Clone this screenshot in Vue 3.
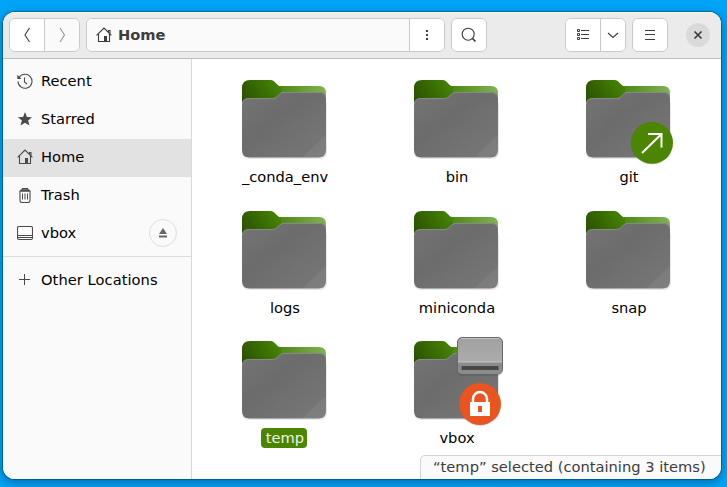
<script setup>
const places = [
  { name: 'Recent', icon: 'recent' },
  { name: 'Starred', icon: 'star' },
  { name: 'Home', icon: 'home', active: true },
  { name: 'Trash', icon: 'trash' },
  { name: 'vbox', icon: 'drive', eject: true },
]

const folders = [
  { name: '_conda_env' },
  { name: 'bin' },
  { name: 'git', link: true },
  { name: 'logs' },
  { name: 'miniconda' },
  { name: 'snap' },
  { name: 'temp', selected: true },
  { name: 'vbox', mount: true },
]
</script>

<template>
  <div class="desktop">
    <svg class="defs" width="0" height="0">
      <defs>
        <linearGradient id="tab" gradientUnits="userSpaceOnUse" x1="8" y1="30" x2="42" y2="10">
          <stop offset="0" stop-color="#2b5200" />
          <stop offset="1" stop-color="#468405" />
        </linearGradient>
        <linearGradient id="strip" gradientUnits="userSpaceOnUse" x1="38" y1="0" x2="90" y2="0">
          <stop offset="0" stop-color="#468405" />
          <stop offset="0.2" stop-color="#528d1c" />
          <stop offset="1" stop-color="#82b154" />
        </linearGradient>
        <linearGradient id="front" x1="0" y1="0" x2="1" y2="1">
          <stop offset="0" stop-color="#747474" />
          <stop offset="0.4" stop-color="#6c6c6c" />
          <stop offset="1" stop-color="#787878" />
        </linearGradient>
        <linearGradient id="disk" x1="0" y1="0" x2="0" y2="1">
          <stop offset="0" stop-color="#a0a0a0" />
          <stop offset="1" stop-color="#b2b2b2" />
        </linearGradient>
        <symbol id="home" viewBox="0 0 16 16">
          <path d="M.6 8.400 8 1l7.400 7.400M2.500 7v7.500h11V7M12.500 5.300V3.500H14v3.300" fill="none" stroke="currentColor" stroke-width="1.100" />
          <path d="M8 9h3v5.500H8z" fill="currentColor" />
        </symbol>
      </defs>
    </svg>

    <div class="window">
      <header class="header">
        <div class="group">
          <button class="btn nav"><svg width="16" height="16"><path d="M10.500 1 6 8l4.500 7" /></svg></button>
          <button class="btn nav dim"><svg width="16" height="16"><path d="M6 1l4.500 7L6 15" /></svg></button>
        </div>
        <div class="group path">
          <div class="crumb"><svg width="16" height="16"><use href="#home" /></svg><b>Home</b></div>
          <button class="btn dots"><svg width="16" height="16"><path class="solid" d="M7 3h2v2H7zM7 7h2v2H7zM7 11h2v2H7z" /></svg></button>
        </div>
        <div class="group search">
          <button class="btn"><svg width="16" height="16"><circle cx="7.200" cy="7.200" r="6" /><path class="thick" d="M11.500 11.500l3 3" /></svg></button>
        </div>
        <div class="group view">
          <button class="btn list"><svg width="16" height="16"><path class="crisp" d="M2.500 2.500h2v2h-2zM2.500 6.500h2v2h-2zM2.500 10.500h2v2h-2zM6 3.500h8M6 7.500h8M6 11.500h8" /></svg></button>
          <button class="btn drop"><svg width="16" height="16"><path d="M3 6l5 4.500L13 6" /></svg></button>
        </div>
        <div class="group menu">
          <button class="btn"><svg width="16" height="16"><path class="crisp" d="M3 3.500h10M3 7.500h10M3 12.500h10" /></svg></button>
        </div>
        <button class="close"><svg width="16" height="16"><path class="thick" d="M4.500 4.500l7 7M11.500 4.500l-7 7" /></svg></button>
      </header>

      <div class="body">
        <aside class="sidebar">
          <div v-for="p in places" :key="p.name" class="place" :class="{ active: p.active }">
            <svg width="16" height="16">
              <use v-if="p.icon === 'home'" href="#home" />
              <g v-else-if="p.icon === 'recent'">
                <path d="M1.800 5A7 7 0 1 1 1 8.500M7.500 4.500v4.500l2.500 2" />
                <path class="solid" d="M.3 1.800V6h4.200z" />
              </g>
              <path v-else-if="p.icon === 'star'" class="solid" d="M8 1l1.900 4.900 5.200.3-4 3.400 1.400 5L8 11.800l-4.500 2.800 1.400-5-4-3.400 5.200-.3z" />
              <g v-else-if="p.icon === 'trash'">
                <path d="M5.500 2.500v-1h5v1M3 5v8.500q0 2 2 2h6q2 0 2-2V5" />
                <path class="solid" d="M4 2.200h8l2.300 2.600H1.700z" />
                <path class="crisp" d="M5.500 6.500v6M8 6.500v6M10.500 6.500v6" />
              </g>
              <path v-else d="M2 1.500h12q1.500 0 1.500 1.500v10q0 1.500-1.500 1.500H2Q.5 14.500.5 13V3Q.5 1.500 2 1.500zM1 10.500h14M1 12.500h14" />
            </svg>
            <span>{{ p.name }}</span>
            <button v-if="p.eject" class="eject"><svg width="16" height="16"><path class="solid" d="M8 3l4 6H4zM4 10.500h8v2H4z" /></svg></button>
          </div>
          <div class="rule"></div>
          <div class="place wide">
            <svg width="16" height="16"><path class="crisp" d="M2 7.500h11M7.500 2v11" /></svg>
            <span>Other Locations</span>
          </div>
        </aside>

        <main class="files">
          <div v-for="f in folders" :key="f.name" class="file">
            <svg width="96" height="96" viewBox="0 0 96 96">
              <path class="shade" d="M6 34q0-7 7-7h70q8 0 8 8v46q0 7-7 7H13q-7 0-7-7z" />
              <path fill="url(#strip)" d="M30 15h53q7 0 7 7v25H30z" />
              <path fill="url(#tab)" d="M6 17q0-8 8-8h21q2 0 3.500 1.700l3.500 3.500Q43.200 15 45 15.300V32H6z" />
              <path fill="url(#front)" d="M6 34q0-7 7-7h24q2 0 3.500-1.400l3.200-3Q45.200 21 47 21h36q7 0 7 7v51q0 7.500-7.500 7.500h-69Q6 86.500 6 79z" />
              <path class="edge" d="M6.500 32.500Q7 27.500 13 27.500h24q2 0 3.500-1.400l3.200-3q1.500-1.600 3.300-1.600h36q6 0 6.500 5" />
              <path class="corner" d="M90 64v15q0 7.500-7.500 7.500H66z" />
              <g v-if="f.link">
                <circle class="shade" cx="72" cy="72.500" r="21.300" />
                <circle fill="#4b8501" cx="72" cy="71.800" r="21" />
                <path class="glyph" d="M62 82l19.500-19M68 63h13.500v13.500" />
              </g>
              <g v-if="f.mount">
                <rect class="shade" x="49" y="6" width="46" height="38" rx="5" />
                <rect x="49.500" y="5.500" width="45" height="36.500" rx="4.500" fill="url(#disk)" stroke="#666" />
                <path fill="#8c8c8c" d="M50 30h44v8q0 3.500-4 3.500H54q-4 0-4-3.500z" />
                <path stroke="#c4c4c4" fill="none" d="M53 6.500h38M50 30h44" />
                <path fill="#484848" d="M53.500 34h37v4h-37z" />
                <circle class="shade" cx="72" cy="72.700" r="21.300" />
                <circle fill="#e95420" cx="72" cy="72" r="21" />
                <path class="shackle" d="M65 72v-5a7 7 0 0 1 14 0v5" />
                <path fill="#fff" fill-rule="evenodd" d="M62 70h20v14H62zM70 74v6h4v-6z" />
              </g>
            </svg>
            <span class="label" :class="{ selected: f.selected }">{{ f.name }}</span>
          </div>
        </main>
      </div>
      <div class="status">“temp” selected (containing 3 items)</div>
    </div>
  </div>
</template>

<style>
body { margin: 0; overflow: hidden; }
</style>

<style scoped>
.desktop {
  box-sizing: border-box;
  width: 727px;
  height: 487px;
  padding: 12px 6px 8px 3px;
  overflow: hidden;
  background: #00a3f5;
  font: 14.667px/20px "DejaVu Sans", sans-serif;
  color: #000;
}
.defs { position: absolute; }
.window {
  position: relative;
  display: flex;
  flex-direction: column;
  height: 467px;
  overflow: hidden;
  border-radius: 12px;
  background: #fff;
  box-shadow: 0 0 0 1px rgba(0, 45, 80, .4), 0 3px 9px 1px rgba(0, 40, 80, .4);
}
.header {
  box-sizing: border-box;
  display: flex;
  height: 47px;
  padding: 6px 11px 0 6px;
  border-bottom: 1px solid #bdbdbd;
  background: #ebebeb;
  box-shadow: inset 0 1px #f9f9f9;
}
.group {
  box-sizing: border-box;
  display: flex;
  height: 34px;
  margin-right: 6px;
  overflow: hidden;
  border: 1px solid #c9c9c9;
  border-radius: 6px;
  background: #fff;
}
.btn {
  display: flex;
  flex: 1;
  align-items: center;
  justify-content: center;
  padding: 0;
  border: 0;
  background: #fff;
  color: #3d3d3d;
}
.nav { box-sizing: border-box; flex: none; width: 34px; }
.nav.dim { width: 35px; border-left: 1px solid #c9c9c9; background: #fafafa; color: #949494; }
.path { width: 359px; }
.crumb {
  display: flex;
  flex: 1;
  align-items: center;
  gap: 6px;
  padding-left: 9px;
  background: #fafafa;
  color: #3d3d3d;
}
.dots { box-sizing: border-box; flex: none; width: 35px; border-left: 1px solid #c9c9c9; }
.search { width: 36px; }
.view { width: 61px; margin-left: auto; }
.drop { box-sizing: border-box; flex: none; width: 25px; border-left: 1px solid #c9c9c9; }
.menu { width: 36px; margin-right: 18px; }
.close {
  display: flex;
  align-items: center;
  justify-content: center;
  width: 24px;
  height: 24px;
  margin-top: 5px;
  padding: 0;
  border: 0;
  border-radius: 50%;
  background: #dadada;
  color: #3d3d3d;
}
svg { display: block; flex: none; fill: none; }
.btn path, .btn circle, .close path, .place path { stroke: currentColor; stroke-width: 1.1; }
.btn .solid, .place .solid { fill: currentColor; stroke: none; }
.btn .thick, .close .thick { stroke-width: 1.7; }
.btn .crisp, .place .crisp { stroke-width: 1; }
.body { display: flex; flex: 1; }
.sidebar {
  box-sizing: border-box;
  width: 189px;
  padding-top: 4px;
  border-right: 1px solid #d9d9d9;
  background: #fafafa;
}
.place {
  box-sizing: border-box;
  display: flex;
  align-items: center;
  gap: 8px;
  height: 38px;
  padding: 0 14px 2px;
}
.place > svg { color: #4a4a4a; }
.place.active { background: #e2e2e2; }
.place.wide { letter-spacing: .05px; }
.eject {
  box-sizing: border-box;
  display: flex;
  align-items: center;
  justify-content: center;
  width: 28px;
  height: 28px;
  margin-left: auto;
  padding: 0;
  border: 1px solid #dedede;
  border-radius: 50%;
  background: #fafafa;
  color: #666;
}
.rule { height: 1px; margin: 3px 0 5px; background: #dcdcdc; }
.files {
  display: grid;
  flex: 1;
  grid-template-columns: repeat(3, 96px);
  grid-template-rows: 131px 130px 116px;
  column-gap: 76px;
  align-content: start;
  padding: 12px 0 0 44px;
}
.file { display: flex; flex-direction: column; align-items: center; }
.label { box-sizing: border-box; height: 20px; padding: 0 3px 0 5px; border-radius: 4px; white-space: nowrap; }
.label.selected { background: #4b8501; color: #edf3e6; }
.shade { fill: rgba(0, 0, 0, .09); }
.edge { stroke: #888; }
.corner { fill: rgba(255, 255, 255, .055); }
.glyph { stroke: #fff; stroke-width: 2; }
.shackle { stroke: #fff; stroke-width: 2.5; }
.status {
  position: absolute;
  right: 0;
  bottom: 0;
  box-sizing: border-box;
  width: 301px;
  height: 24px;
  padding: 1px 0 0 12px;
  border: solid #d5d5d5;
  border-width: 1px 0 0 1px;
  border-top-left-radius: 5px;
  background: #fafafa;
  color: #3d3d3d;
  white-space: nowrap;
}
</style>
